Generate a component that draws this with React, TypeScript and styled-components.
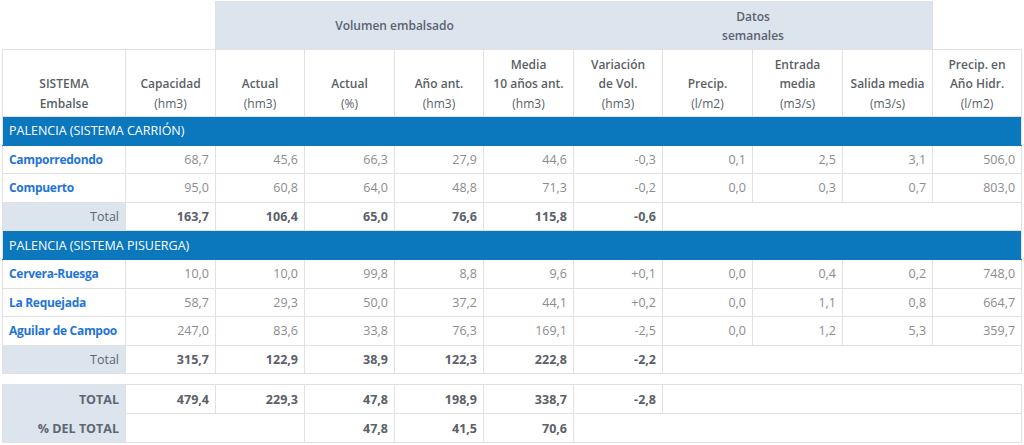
import styled, { createGlobalStyle } from "styled-components";

const GlobalStyle = createGlobalStyle`
  body {
    margin: 0;
    background: #ffffff;
    font-family: "Open Sans", "Liberation Sans", sans-serif;
  }
`;

const Wrapper = styled.div`
  padding: 1px 3px 0 2px;
`;

const Table = styled.table<{ $gap?: boolean }>`
  width: 1019px;
  table-layout: fixed;
  border-collapse: collapse;
  margin-top: ${({ $gap }) => ($gap ? "10px" : "0")};
  font-size: 12.5px;
  color: #8a8a8a;

  td,
  th {
    border: 1px solid #e1e1e1;
    padding: 0 6px;
    overflow: hidden;
    white-space: nowrap;
  }
`;

const GroupTopRow = styled.tr`
  height: 48px;
`;

const EmptyTop = styled.th`
  && {
    border: none;
    border-bottom: 1px solid #e1e1e1;
  }
`;

const GroupHead = styled.th`
  background: #dce4ee;
  color: #5a6270;
  font-weight: 600;
  font-size: 12px;
  line-height: 19px;
  text-align: center;
  vertical-align: middle;
`;

const HeadRow = styled.tr`
  height: 67px;
`;

const HeadCell = styled.th`
  color: #5a5f66;
  font-weight: 600;
  font-size: 12px;
  line-height: 19.5px;
  text-align: center;
  vertical-align: bottom;
  && {
    padding-bottom: 3px;
  }
`;

const Unit = styled.span`
  display: block;
  font-weight: 400;
`;

const SystemRow = styled.tr`
  height: 28.6px;
  background: #0b77bd;
`;

const SystemCell = styled.td`
  color: #ffffff;
  font-size: 12.5px;
  text-align: left;
  && {
    border-color: #0b77bd;
    border-left-color: #e1e1e1;
    border-right-color: #e1e1e1;
    padding-left: 6px;
  }
`;

const Row = styled.tr<{ $h?: number }>`
  height: ${({ $h }) => $h ?? 28.6}px;
`;

const NameCell = styled.td`
  color: #1f74d6;
  font-weight: 700;
  font-size: 12px;
  letter-spacing: -0.3px;
  text-align: left;
  && {
    padding: 0 0 0 6px;
  }
`;

const LabelCell = styled.td<{ $strong?: boolean }>`
  background: #dce4ee;
  text-align: right;
  color: #5f6670;
  font-weight: ${({ $strong }) => ($strong ? 700 : 400)};
`;

const NumCell = styled.td<{ $strong?: boolean }>`
  text-align: right;
  color: ${({ $strong }) => ($strong ? "#5c6068" : "#8c8c8c")};
  font-weight: ${({ $strong }) => ($strong ? 700 : 400)};
`;

const BlankCell = styled.td``;

const widths = [123, 90, 89, 90, 89, 90, 89, 90, 90, 90, 89];

const Cols = () => (
  <colgroup>
    {widths.map((w, i) => (
      <col key={i} style={{ width: w }} />
    ))}
  </colgroup>
);

type Embalse = { name: string; values: string[] };

const carrion: Embalse[] = [
  { name: "Camporredondo", values: ["68,7", "45,6", "66,3", "27,9", "44,6", "-0,3", "0,1", "2,5", "3,1", "506,0"] },
  { name: "Compuerto", values: ["95,0", "60,8", "64,0", "48,8", "71,3", "-0,2", "0,0", "0,3", "0,7", "803,0"] },
];

const pisuerga: Embalse[] = [
  { name: "Cervera-Ruesga", values: ["10,0", "10,0", "99,8", "8,8", "9,6", "+0,1", "0,0", "0,4", "0,2", "748,0"] },
  { name: "La Requejada", values: ["58,7", "29,3", "50,0", "37,2", "44,1", "+0,2", "0,0", "1,1", "0,8", "664,7"] },
  { name: "Aguilar de Campoo", values: ["247,0", "83,6", "33,8", "76,3", "169,1", "-2,5", "0,0", "1,2", "5,3", "359,7"] },
];

const Group = ({ title, rows, totals }: { title: string; rows: Embalse[]; totals: string[] }) => (
  <>
    <SystemRow>
      <SystemCell colSpan={11}>{title}</SystemCell>
    </SystemRow>
    {rows.map((r) => (
      <Row key={r.name}>
        <NameCell>{r.name}</NameCell>
        {r.values.map((v, i) => (
          <NumCell key={i}>{v}</NumCell>
        ))}
      </Row>
    ))}
    <Row>
      <LabelCell>Total</LabelCell>
      {totals.map((v, i) => (
        <NumCell key={i} $strong>
          {v}
        </NumCell>
      ))}
      <BlankCell colSpan={4} />
    </Row>
  </>
);

export default function App() {
  return (
    <Wrapper>
      <GlobalStyle />
      <Table>
        <Cols />
        <thead>
          <GroupTopRow>
            <EmptyTop colSpan={2} />
            <GroupHead colSpan={4}>Volumen embalsado</GroupHead>
            <GroupHead colSpan={4}>
              Datos
              <br />
              semanales
            </GroupHead>
            <EmptyTop />
          </GroupTopRow>
          <HeadRow>
            <HeadCell>
              SISTEMA
              <br />
              Embalse
            </HeadCell>
            <HeadCell>
              Capacidad<Unit>(hm3)</Unit>
            </HeadCell>
            <HeadCell>
              Actual<Unit>(hm3)</Unit>
            </HeadCell>
            <HeadCell>
              Actual<Unit>(%)</Unit>
            </HeadCell>
            <HeadCell>
              Año ant.<Unit>(hm3)</Unit>
            </HeadCell>
            <HeadCell>
              Media
              <br />
              10 años ant.<Unit>(hm3)</Unit>
            </HeadCell>
            <HeadCell>
              Variación
              <br />
              de Vol.<Unit>(hm3)</Unit>
            </HeadCell>
            <HeadCell>
              Precip.<Unit>(l/m2)</Unit>
            </HeadCell>
            <HeadCell>
              Entrada
              <br />
              media<Unit>(m3/s)</Unit>
            </HeadCell>
            <HeadCell>
              Salida media<Unit>(m3/s)</Unit>
            </HeadCell>
            <HeadCell>
              Precip. en
              <br />
              Año Hidr.<Unit>(l/m2)</Unit>
            </HeadCell>
          </HeadRow>
        </thead>
        <tbody>
          <Group
            title="PALENCIA (SISTEMA CARRIÓN)"
            rows={carrion}
            totals={["163,7", "106,4", "65,0", "76,6", "115,8", "-0,6"]}
          />
          <Group
            title="PALENCIA (SISTEMA PISUERGA)"
            rows={pisuerga}
            totals={["315,7", "122,9", "38,9", "122,3", "222,8", "-2,2"]}
          />
        </tbody>
      </Table>
      <Table $gap>
        <Cols />
        <tbody>
          <Row $h={29}>
            <LabelCell $strong>TOTAL</LabelCell>
            {["479,4", "229,3", "47,8", "198,9", "338,7", "-2,8"].map((v, i) => (
              <NumCell key={i} $strong>
                {v}
              </NumCell>
            ))}
            <BlankCell colSpan={4} />
          </Row>
          <Row $h={29}>
            <LabelCell $strong>% DEL TOTAL</LabelCell>
            <BlankCell colSpan={2} />
            {["47,8", "41,5", "70,6"].map((v, i) => (
              <NumCell key={i} $strong>
                {v}
              </NumCell>
            ))}
            <BlankCell colSpan={5} />
          </Row>
        </tbody>
      </Table>
    </Wrapper>
  );
}
